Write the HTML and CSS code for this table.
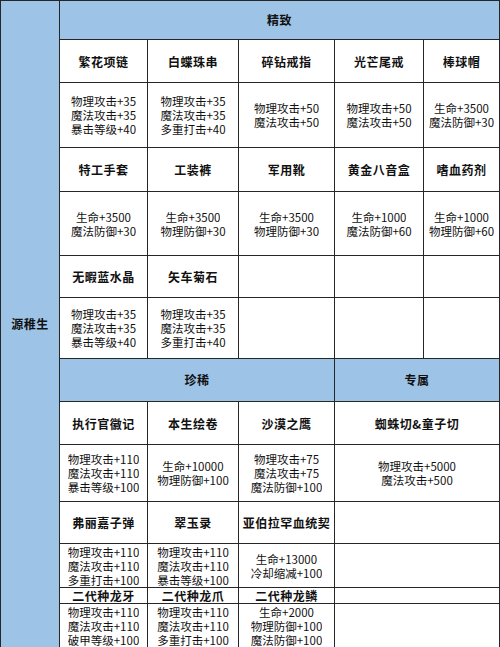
FILE: index.html
```html
<!DOCTYPE html>
<html lang="zh-CN">
<head>
<meta charset="utf-8">
<title>源稚生 装备</title>
<link rel="stylesheet" href="styles.css">
</head>
<body>
<div class="sheet">
  <div class="cell side">源稚生</div>

  <div class="cell head span5">精致</div>

  <div class="cell name">繁花项链</div>
  <div class="cell name">白蝶珠串</div>
  <div class="cell name">碎钻戒指</div>
  <div class="cell name">光芒尾戒</div>
  <div class="cell name">棒球帽</div>

  <div class="cell stat"><span class="ln">物理攻击+35</span><span class="ln">魔法攻击+35</span><span class="ln">暴击等级+40</span></div>
  <div class="cell stat"><span class="ln">物理攻击+35</span><span class="ln">魔法攻击+35</span><span class="ln">多重打击+40</span></div>
  <div class="cell stat"><span class="ln">物理攻击+50</span><span class="ln">魔法攻击+50</span></div>
  <div class="cell stat"><span class="ln">物理攻击+50</span><span class="ln">魔法攻击+50</span></div>
  <div class="cell stat"><span class="ln">生命+3500</span><span class="ln">魔法防御+30</span></div>

  <div class="cell name">特工手套</div>
  <div class="cell name">工装裤</div>
  <div class="cell name">军用靴</div>
  <div class="cell name">黄金八音盒</div>
  <div class="cell name">嗜血药剂</div>

  <div class="cell stat"><span class="ln">生命+3500</span><span class="ln">魔法防御+30</span></div>
  <div class="cell stat"><span class="ln">生命+3500</span><span class="ln">物理防御+30</span></div>
  <div class="cell stat"><span class="ln">生命+3500</span><span class="ln">物理防御+30</span></div>
  <div class="cell stat"><span class="ln">生命+1000</span><span class="ln">魔法防御+60</span></div>
  <div class="cell stat"><span class="ln">生命+1000</span><span class="ln">物理防御+60</span></div>

  <div class="cell name">无暇蓝水晶</div>
  <div class="cell name">矢车菊石</div>
  <div class="cell"></div>
  <div class="cell"></div>
  <div class="cell"></div>

  <div class="cell stat"><span class="ln">物理攻击+35</span><span class="ln">魔法攻击+35</span><span class="ln">暴击等级+40</span></div>
  <div class="cell stat"><span class="ln">物理攻击+35</span><span class="ln">魔法攻击+35</span><span class="ln">多重打击+40</span></div>
  <div class="cell"></div>
  <div class="cell"></div>
  <div class="cell"></div>

  <div class="cell head span3">珍稀</div>
  <div class="cell head span2">专属</div>

  <div class="cell name">执行官徽记</div>
  <div class="cell name">本生绘卷</div>
  <div class="cell name">沙漠之鹰</div>
  <div class="cell name span2">蜘蛛切&amp;童子切</div>

  <div class="cell stat"><span class="ln">物理攻击+110</span><span class="ln">魔法攻击+110</span><span class="ln">暴击等级+100</span></div>
  <div class="cell stat"><span class="ln">生命+10000</span><span class="ln">物理防御+100</span></div>
  <div class="cell stat"><span class="ln">物理攻击+75</span><span class="ln">魔法攻击+75</span><span class="ln">魔法防御+100</span></div>
  <div class="cell stat span2"><span class="ln">物理攻击+5000</span><span class="ln">魔法攻击+500</span></div>

  <div class="cell name">弗丽嘉子弹</div>
  <div class="cell name">翠玉录</div>
  <div class="cell name">亚伯拉罕血统契</div>
  <div class="cell span2"></div>

  <div class="cell stat"><span class="ln">物理攻击+110</span><span class="ln">魔法攻击+110</span><span class="ln">多重打击+100</span></div>
  <div class="cell stat"><span class="ln">物理攻击+110</span><span class="ln">魔法攻击+110</span><span class="ln">暴击等级+100</span></div>
  <div class="cell stat"><span class="ln">生命+13000</span><span class="ln">冷却缩减+100</span></div>
  <div class="cell span2"></div>

  <div class="cell name">二代种龙牙</div>
  <div class="cell name">二代种龙爪</div>
  <div class="cell name">二代种龙鳞</div>
  <div class="cell span2"></div>

  <div class="cell stat"><span class="ln">物理攻击+110</span><span class="ln">魔法攻击+110</span><span class="ln">破甲等级+100</span></div>
  <div class="cell stat"><span class="ln">物理攻击+110</span><span class="ln">魔法攻击+110</span><span class="ln">多重打击+100</span></div>
  <div class="cell stat"><span class="ln">生命+2000</span><span class="ln">物理防御+100</span><span class="ln">魔法防御+100</span></div>
  <div class="cell span2"></div>
</div>
</body>
</html>
```

FILE: styles.css
```css
html, body {
  margin: 0;
  padding: 0;
  background: #ffffff;
}

body {
  width: 500px;
  height: 647px;
  overflow: hidden;
  font-family: "Noto Sans CJK SC", "Liberation Sans", sans-serif;
  color: #111111;
}

.sheet {
  width: 500px;
  box-sizing: border-box;
  padding: 1px;
  background: #262626;
  display: grid;
  gap: 1px;
  grid-template-columns: 58px 87px 90px 95px 88px 75px;
  grid-template-rows: 38px 42px 64px 43px 63px 41px 60px 42px 42px 56px 41px 43px 15px 43px;
}

.cell {
  background: #ffffff;
  display: flex;
  align-items: center;
  justify-content: center;
  text-align: center;
  font-size: 12px;
  line-height: 14px;
}

.side {
  grid-column: 1;
  grid-row: 1 / -1;
  background: #9dc3e6;
  font-weight: bold;
  letter-spacing: 0.5px;
}

.head {
  background: #9dc3e6;
  font-weight: bold;
  letter-spacing: 0.5px;
}

.name {
  font-weight: bold;
  letter-spacing: 0.5px;
  line-height: 15px;
}

.stat {
  flex-direction: column;
  font-size: 11.5px;
}

.ln {
  display: block;
  height: 14px;
  line-height: 14px;
  overflow: hidden;
  white-space: nowrap;
}

.span5 { grid-column: 2 / 7; }
.span3 { grid-column: 2 / 5; }
.span2 { grid-column: 5 / 7; }
```
